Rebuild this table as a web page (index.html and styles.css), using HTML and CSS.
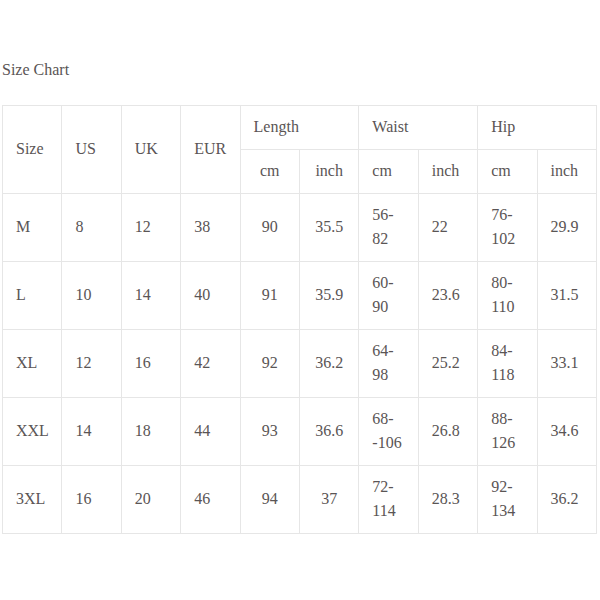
FILE: index.html
```html
<!DOCTYPE html>
<html>
<head>
<meta charset="utf-8">
<link rel="stylesheet" href="styles.css">
</head>
<body>
<div class="page">
  <p class="title">Size Chart</p>
  <table class="chart">
    <colgroup>
      <col><col><col><col><col><col><col><col><col><col>
    </colgroup>
    <thead>
      <tr>
        <th rowspan="2">Size</th>
        <th rowspan="2">US</th>
        <th rowspan="2">UK</th>
        <th rowspan="2">EUR</th>
        <th colspan="2">Length</th>
        <th colspan="2">Waist</th>
        <th colspan="2">Hip</th>
      </tr>
      <tr>
        <th class="c">cm</th>
        <th class="c">inch</th>
        <th>cm</th>
        <th>inch</th>
        <th>cm</th>
        <th>inch</th>
      </tr>
    </thead>
    <tbody>
      <tr><td>M</td><td>8</td><td>12</td><td>38</td><td class="c">90</td><td class="c">35.5</td><td>56-<br>82</td><td>22</td><td>76-<br>102</td><td>29.9</td></tr>
      <tr><td>L</td><td>10</td><td>14</td><td>40</td><td class="c">91</td><td class="c">35.9</td><td>60-<br>90</td><td>23.6</td><td>80-<br>110</td><td>31.5</td></tr>
      <tr><td>XL</td><td>12</td><td>16</td><td>42</td><td class="c">92</td><td class="c">36.2</td><td>64-<br>98</td><td>25.2</td><td>84-<br>118</td><td>33.1</td></tr>
      <tr><td>XXL</td><td>14</td><td>18</td><td>44</td><td class="c">93</td><td class="c">36.6</td><td>68-<br>-106</td><td>26.8</td><td>88-<br>126</td><td>34.6</td></tr>
      <tr><td>3XL</td><td>16</td><td>20</td><td>46</td><td class="c">94</td><td class="c">37</td><td>72-<br>114</td><td>28.3</td><td>92-<br>134</td><td>36.2</td></tr>
    </tbody>
  </table>
</div>
</body>
</html>
```

FILE: styles.css
```css
html, body {
  margin: 0;
  padding: 0;
  background: #ffffff;
}
.page {
  padding: 58px 2px 0 2px;
  font-family: "Liberation Serif", "Times New Roman", serif;
  font-size: 16px;
  line-height: 24px;
  color: #5a5555;
}
.title {
  margin: 0 0 23px 0;
}
.chart {
  border-collapse: collapse;
  table-layout: fixed;
  width: 595px;
}
.chart th,
.chart td {
  border: 1px solid #e6e6e6;
  padding: 9px 0 10px 13px;
  font-weight: normal;
  text-align: left;
  vertical-align: middle;
}
.chart .c {
  text-align: center;
  padding-left: 0;
}
```
